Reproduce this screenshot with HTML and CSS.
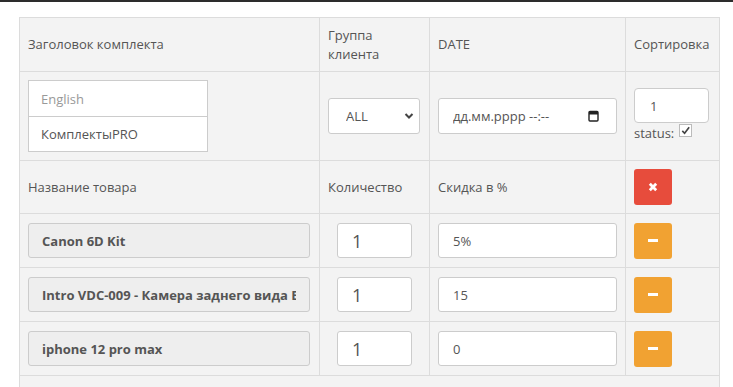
FILE: index.html
```html
<!DOCTYPE html>
<html lang="ru">
<head>
<meta charset="utf-8">
<title>Комплект</title>
<link rel="stylesheet" href="styles.css">
</head>
<body>
<div class="topbar"></div>
<div class="wrap">
  <table class="kit">
    <colgroup>
      <col class="c1"><col class="c2"><col class="c3"><col class="c4">
    </colgroup>
    <tr class="head">
      <td>Заголовок комплекта</td>
      <td>Группа клиента</td>
      <td>DATE</td>
      <td>Сортировка</td>
    </tr>
    <tr class="settings">
      <td>
        <input class="field lang-top" type="text" placeholder="English">
        <input class="field lang-bottom" type="text" value="КомплектыPRO">
      </td>
      <td>
        <div class="select-wrap">
          <select class="field sel"><option>ALL</option></select>
          <svg class="chev" width="10" height="8" viewBox="0 0 10 8"><path d="M1.5 2 L5 5.5 L8.5 2" fill="none" stroke="#444" stroke-width="2"/></svg>
        </div>
      </td>
      <td>
        <div class="date-wrap">
          <input class="field date" type="text" value="дд.мм.рррр --:--">
          <svg class="cal" width="11" height="12" viewBox="0 0 11 12"><rect x="1" y="1.5" width="9" height="9.5" rx="1" fill="none" stroke="#222" stroke-width="1.4"/><rect x="1" y="1.5" width="9" height="3" fill="#222"/></svg>
        </div>
      </td>
      <td>
        <input class="field sort" type="text" value="1">
        <div class="status">status: <span class="check"><svg width="12" height="12" viewBox="0 0 12 12"><path d="M2.5 6.5 L5 9 L10 2.5" fill="none" stroke="#444" stroke-width="1.8"/></svg></span></div>
      </td>
    </tr>
    <tr class="labels">
      <td>Название товара</td>
      <td>Количество</td>
      <td>Скидка в %</td>
      <td><button class="btn danger"><svg width="10" height="10" viewBox="0 0 10 10"><path d="M1.8 1.8 L8.2 8.2 M8.2 1.8 L1.8 8.2" stroke="#fff" stroke-width="2.8" stroke-linecap="butt"/></svg></button></td>
    </tr>
    <tr class="item">
      <td><input class="field name" type="text" readonly value="Canon 6D Kit"></td>
      <td><input class="field qty" type="text" value="1"></td>
      <td><input class="field disc" type="text" value="5%"></td>
      <td><button class="btn warn"><span class="minus"></span></button></td>
    </tr>
    <tr class="item">
      <td><input class="field name" type="text" readonly value="Intro VDC-009 - Камера заднего вида Black"></td>
      <td><input class="field qty" type="text" value="1"></td>
      <td><input class="field disc" type="text" value="15"></td>
      <td><button class="btn warn"><span class="minus"></span></button></td>
    </tr>
    <tr class="item">
      <td><input class="field name" type="text" readonly value="iphone 12 pro max"></td>
      <td><input class="field qty" type="text" value="1"></td>
      <td><input class="field disc" type="text" value="0"></td>
      <td><button class="btn warn"><span class="minus"></span></button></td>
    </tr>
    <tr class="foot">
      <td colspan="4"><input class="field wide" type="text" value=""></td>
    </tr>
  </table>
</div>
</body>
</html>
```
FILE: styles.css
```css
* { box-sizing: border-box; }
html, body { margin: 0; padding: 0; background: #fff; }
body {
  font-family: "Open Sans", "DejaVu Sans", sans-serif;
  font-size: 13px;
  line-height: 18.5px;
  color: #555;
  overflow: hidden;
}
.topbar { height: 2px; background: #2d2d2d; }
.wrap { padding: 15px 0 0 19px; }
.kit {
  border-collapse: collapse;
  width: 700px;
  table-layout: fixed;
  background: #f3f3f3;
}
.c1 { width: 300px; }
.c2 { width: 110px; }
.c3 { width: 196px; }
.c4 { width: 94px; }
.kit td {
  border: 1px solid #dcdcdc;
  padding: 8px;
  vertical-align: middle;
}
.head td { height: 54px; }
.settings td { height: 89px; }
.labels td { height: 53px; }
.item td { height: 54px; }
.foot td { height: 90px; vertical-align: top; padding-top: 62px; }

.field {
  display: block;
  font-family: inherit;
  font-size: 13px;
  color: #555;
  background: #fff;
  border: 1px solid #ccc;
  border-radius: 0;
  outline: none;
  padding: 0 12px;
  margin: 0;
}
.field::placeholder { color: #999; }
.lang-top { width: 180px; height: 37px; }
.lang-bottom { width: 180px; height: 36px; margin-top: -1px; }

.select-wrap, .date-wrap { position: relative; }
.sel {
  appearance: none;
  -webkit-appearance: none;
  width: 92px;
  height: 36px;
  border-radius: 3px;
  padding: 0 17px;
}
.chev { position: absolute; left: 76px; top: 14px; }
.date { width: 179px; height: 36px; border-radius: 3px; padding: 0 14px; }
.cal { position: absolute; left: 150px; top: 12px; }

.sort { width: 75px; height: 35px; border-radius: 4px; padding: 0 15px; margin-top: -2px; }
.status { display: flex; align-items: center; gap: 5px; margin-top: 1px; line-height: 18px; }
.check {
  display: inline-flex;
  width: 13px; height: 13px;
  border: 1px solid #bbb;
  background: #fff;
  align-items: center; justify-content: center;
  margin-top: -6px;
}
.check svg { width: 11px; height: 11px; }

.btn {
  display: flex;
  align-items: center;
  justify-content: center;
  width: 38px;
  height: 36px;
  border: 0;
  border-radius: 3px;
  padding: 0;
}
.danger { background: #e74c3c; }
.warn { background: #f1a232; }
.minus { display: block; width: 10px; height: 3px; background: #fff; }

.name {
  width: 282px;
  height: 35px;
  background: #eee;
  border-radius: 3px;
  padding: 0 13px;
  font-weight: bold;
}
.qty { width: 75px; height: 35px; border-radius: 3px; font-size: 18px; padding: 0 14px; margin-left: 9px; }
.disc { width: 179px; height: 35px; border-radius: 3px; padding: 0 14px; }
.wide { width: 682px; height: 36px; border-radius: 3px; }
```
